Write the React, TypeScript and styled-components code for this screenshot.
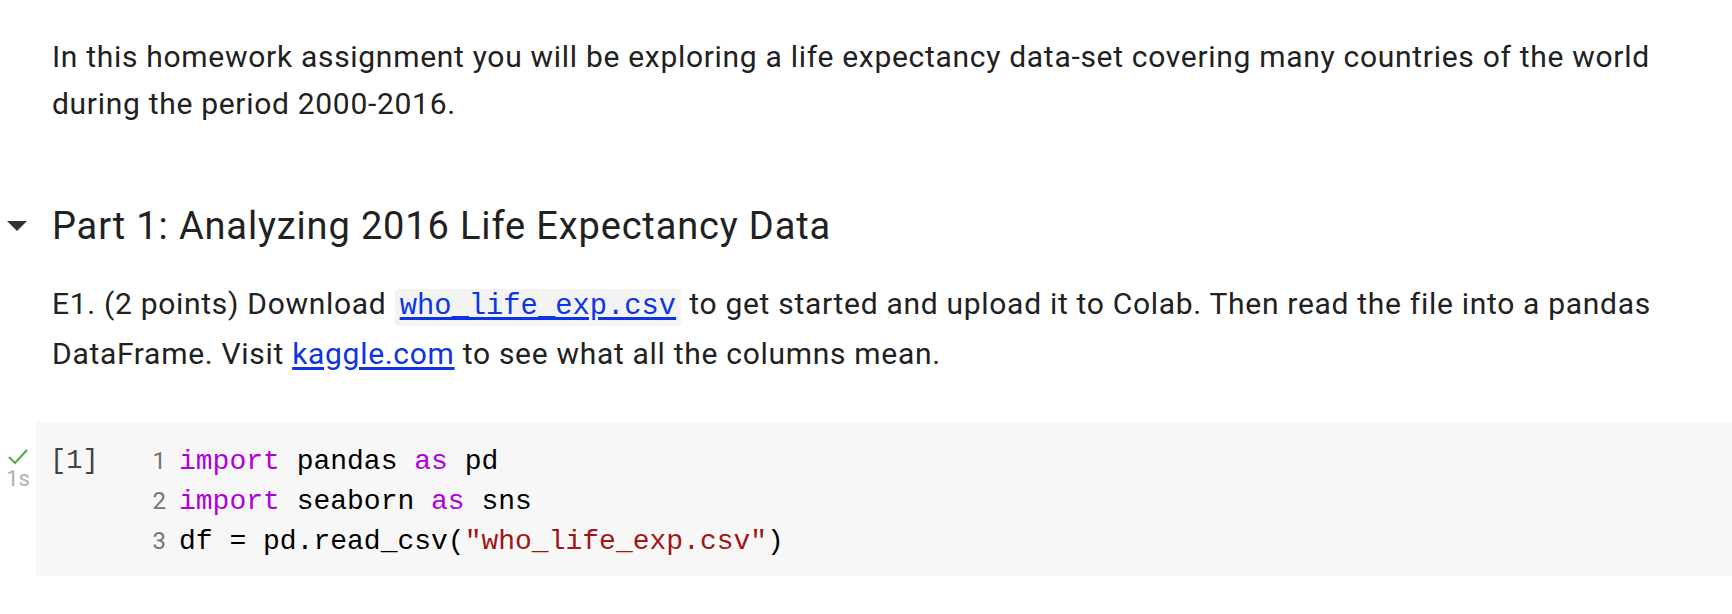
import * as React from "react"
import styled, { createGlobalStyle } from "styled-components"

const GlobalStyle = createGlobalStyle`
    html, body {
        margin: 0;
        padding: 0;
        background: #ffffff;
    }
    body {
        font-family: Roboto, "Noto Sans", sans-serif;
        color: #212121;
    }
`

const Notebook = styled.div`
    width: 1732px;
    padding-top: 33px;
`

const TextCell = styled.div`
    padding-left: 52px;
    padding-right: 40px;
`

const Paragraph = styled.p`
    margin: 0;
    font-size: 30px;
    line-height: 47px;
    letter-spacing: 0.7px;
    color: #212121;
`

const SectionHeader = styled.div`
    display: flex;
    align-items: center;
    margin-top: 75px;
    margin-bottom: 30px;
`

const Toggle = styled.div`
    width: 52px;
    display: flex;
    justify-content: flex-start;
    padding-left: 7px;
    box-sizing: border-box;
`

const Heading = styled.h2`
    margin: 0;
    font-size: 38px;
    line-height: 48px;
    font-weight: 400;
    letter-spacing: 0.85px;
    color: #212121;
`

const InlineCode = styled.code`
    font-family: "Liberation Mono", "DejaVu Sans Mono", monospace;
    font-size: 28.8px;
    letter-spacing: 0;
    background: #f3f3f3;
    border-radius: 4px;
    padding: 1px 5px 3px;
`

const Link = styled.a`
    color: #0d35e4;
    text-decoration: underline;
    text-underline-offset: 3px;
`

const CodeCell = styled.div`
    display: flex;
    margin-top: 45px;
`

const Gutter = styled.div`
    width: 36px;
    display: flex;
    flex-direction: column;
    align-items: center;
    padding-top: 26px;
`

const Duration = styled.div`
    font-size: 22px;
    line-height: 24px;
    color: #b0b0b0;
    margin-top: 2px;
`

const CodeBody = styled.div`
    flex: 1;
    display: flex;
    background: #f7f7f7;
    padding: 19px 0 15px;
`

const ExecCount = styled.div`
    width: 102px;
    padding-left: 14px;
    box-sizing: border-box;
    font-family: "Liberation Mono", "DejaVu Sans Mono", monospace;
    font-size: 27px;
    line-height: 40px;
    color: #424242;
`

const Lines = styled.div`
    display: flex;
    flex-direction: column;
`

const Line = styled.div`
    display: flex;
    align-items: baseline;
    height: 40px;
    line-height: 40px;
`

const LineNo = styled.span`
    width: 28px;
    padding-right: 13px;
    text-align: right;
    font-family: Roboto, sans-serif;
    font-size: 24px;
    color: #757575;
`

const Code = styled.pre`
    margin: 0;
    font-family: "Liberation Mono", "DejaVu Sans Mono", monospace;
    font-size: 28px;
    color: #000000;
`

const Tok = styled.span<{ $kind: "kw" | "str" }>`
    color: ${p => (p.$kind === "kw" ? "#af00db" : "#a31515")};
`

const CaretDown = () => (
    <svg width="20" height="10" viewBox="0 0 20 10">
        <path d="M0 0 L20 0 L10 10 Z" fill="#333333" />
    </svg>
)

const Check = () => (
    <svg width="22" height="17" viewBox="0 0 22 17">
        <path d="M2 9 L8 15 L20 2" fill="none" stroke="#4caf50" strokeWidth="2.2" />
    </svg>
)

export default function App() {
    return (
        <Notebook>
            <GlobalStyle />
            <TextCell>
                <Paragraph>
                    In this homework assignment you will be exploring a life expectancy data-set covering many countries of the world
                    during the period 2000-2016.
                </Paragraph>
            </TextCell>

            <SectionHeader>
                <Toggle>
                    <CaretDown />
                </Toggle>
                <Heading>Part 1: Analyzing 2016 Life Expectancy Data</Heading>
            </SectionHeader>

            <TextCell>
                <Paragraph>
                    E1. (2 points) Download{" "}
                    <Link href="#">
                        <InlineCode>who_life_exp.csv</InlineCode>
                    </Link>{" "}
                    to get started and upload it to Colab. Then read the file into a pandas DataFrame. Visit <Link href="#">kaggle.com</Link> to
                    see what all the columns mean.
                </Paragraph>
            </TextCell>

            <CodeCell>
                <Gutter>
                    <Check />
                    <Duration>1s</Duration>
                </Gutter>
                <CodeBody>
                    <ExecCount>[1]</ExecCount>
                    <Lines>
                        <Line>
                            <LineNo>1</LineNo>
                            <Code>
                                <Tok $kind="kw">import</Tok> pandas <Tok $kind="kw">as</Tok> pd
                            </Code>
                        </Line>
                        <Line>
                            <LineNo>2</LineNo>
                            <Code>
                                <Tok $kind="kw">import</Tok> seaborn <Tok $kind="kw">as</Tok> sns
                            </Code>
                        </Line>
                        <Line>
                            <LineNo>3</LineNo>
                            <Code>
                                df = pd.read_csv(<Tok $kind="str">"who_life_exp.csv"</Tok>)
                            </Code>
                        </Line>
                    </Lines>
                </CodeBody>
            </CodeCell>
        </Notebook>
    )
}
